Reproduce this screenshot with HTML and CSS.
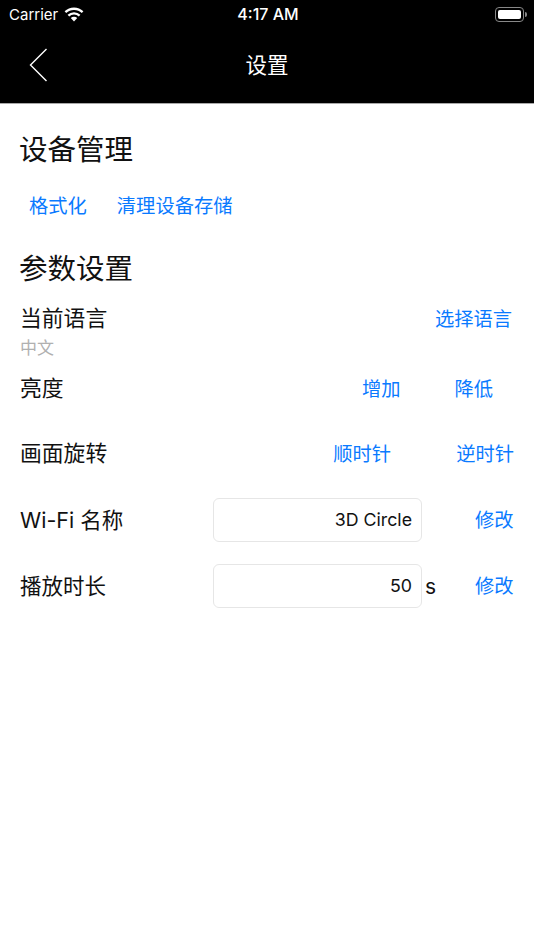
FILE: index.html
```html
<!DOCTYPE html>
<html lang="zh-CN">
<head>
    <meta charset="UTF-8">
    <meta name="viewport" content="width=device-width, initial-scale=1.0">
    <title>设置</title>
    <link rel="stylesheet" href="styles.css">
</head>
<body>
    <header class="top">
        <div class="status">
            <div class="status-left">
                <span>Carrier</span>
                <svg class="wifi" width="20" height="15" viewBox="0 0 20 15">
                    <path d="M10 14.5 L6.8 11 A4.6 4.6 0 0 1 13.2 11 Z" fill="#fff"/>
                    <path d="M4.4 8.6 A8 8 0 0 1 15.6 8.6" fill="none" stroke="#fff" stroke-width="2.3"/>
                    <path d="M1.4 5.2 A12.4 12.4 0 0 1 18.6 5.2" fill="none" stroke="#fff" stroke-width="2.3"/>
                </svg>
            </div>
            <span class="clock">4:17 AM</span>
            <div class="battery">
                <div class="battery-body"><div class="battery-fill"></div></div>
                <div class="battery-tip"></div>
            </div>
        </div>
        <nav class="nav">
            <svg class="back" width="20" height="34" viewBox="0 0 20 34">
                <path d="M17.5 1 L1.5 17 L17.5 33" fill="none" stroke="#fff" stroke-width="1.4"/>
            </svg>
            <h1>设置</h1>
        </nav>
    </header>

    <main class="content">
        <h2>设备管理</h2>
        <div class="actions">
            <a class="link">格式化</a>
            <a class="link">清理设备存储</a>
        </div>

        <h2 class="second">参数设置</h2>
        <div class="row lang">
            <div>
                <div class="label">当前语言</div>
                <div class="sub">中文</div>
            </div>
            <a class="link">选择语言</a>
        </div>
        <div class="row bright">
            <div class="label">亮度</div>
            <div class="pair">
                <a class="link">增加</a>
                <a class="link">降低</a>
            </div>
        </div>
        <div class="row rotate">
            <div class="label">画面旋转</div>
            <div class="pair">
                <a class="link">顺时针</a>
                <a class="link">逆时针</a>
            </div>
        </div>
        <div class="row field-row">
            <div class="label">Wi-Fi 名称</div>
            <div class="input">3D Circle</div>
            <span class="unit"></span>
            <a class="link">修改</a>
        </div>
        <div class="row field-row">
            <div class="label">播放时长</div>
            <div class="input">50</div>
            <span class="unit">s</span>
            <a class="link">修改</a>
        </div>
    </main>
</body>
</html>
```

FILE: styles.css
```css
* {
    box-sizing: border-box;
}

body {
    margin: 0;
    background: #fff;
    color: #111;
    font-family: Inter, "Noto Sans CJK SC", sans-serif;
}

.top {
    height: 104px;
    background: #000;
    color: #fff;
    border-bottom: 1px solid #a8a8a8;
}

.status {
    height: 28px;
    padding: 0 7px 0 9px;
    display: flex;
    align-items: center;
    justify-content: space-between;
    font-size: 15px;
}

.clock {
    font-size: 16px;
    font-weight: 500;
}

.status-left {
    display: flex;
    align-items: center;
    gap: 6px;
    width: 160px;
}

.battery {
    width: 160px;
    display: flex;
    justify-content: flex-end;
    align-items: center;
}

.battery-body {
    width: 29px;
    height: 15px;
    border: 1px solid #888;
    border-radius: 4px;
    padding: 2px;
}

.battery-fill {
    height: 100%;
    background: #fff;
    border-radius: 2px;
}

.battery-tip {
    width: 2px;
    height: 5px;
    margin-left: 1px;
    background: #888;
    border-radius: 0 2px 2px 0;
}

.nav {
    height: 71px;
    position: relative;
    display: flex;
    align-items: center;
    justify-content: center;
}

.back {
    position: absolute;
    left: 29px;
    top: 20px;
}

.nav h1 {
    margin: 0;
    font-size: 21.5px;
    font-weight: 400;
}

.content {
    padding: 28px 20px 0;
}

h2 {
    margin: 0 0 0 -1px;
    font-size: 28.5px;
    line-height: 36px;
    font-weight: 400;
}

.second {
    margin-top: 31px;
}

.link {
    color: #0a7aff;
    font-size: 19.3px;
    line-height: 28px;
}

.actions {
    margin-top: 24px;
    padding-left: 9px;
    display: flex;
    gap: 30px;
}

.row {
    display: flex;
    align-items: center;
    justify-content: space-between;
}

.label {
    font-size: 21.8px;
    line-height: 30px;
}

.sub {
    font-size: 17px;
    line-height: 22px;
    margin-top: 4px;
    color: #b0b0b0;
}

.lang {
    margin-top: 16px;
    align-items: flex-start;
    padding-right: 2px;
}

.lang .link {
    margin-top: 2px;
}

.bright {
    margin-top: 14px;
    padding-right: 21px;
}

.bright .pair {
    gap: 54px;
}

.rotate {
    margin-top: 35px;
}

.pair {
    display: flex;
    gap: 65px;
    margin-top: 2px;
}

.field-row {
    margin-top: 22px;
    justify-content: flex-start;
}

.field-row .label {
    width: 193px;
    font-size: 21.5px;
}

.input {
    width: 209px;
    height: 44px;
    border: 1px solid #e6e6e6;
    border-radius: 6px;
    padding: 0 9px 0 0;
    font-size: 17.8px;
    line-height: 42px;
    text-align: right;
}

.unit {
    width: 53px;
    padding-left: 3px;
    font-size: 21px;
}

.rotate + .field-row {
    margin-top: 30px;
}
```
